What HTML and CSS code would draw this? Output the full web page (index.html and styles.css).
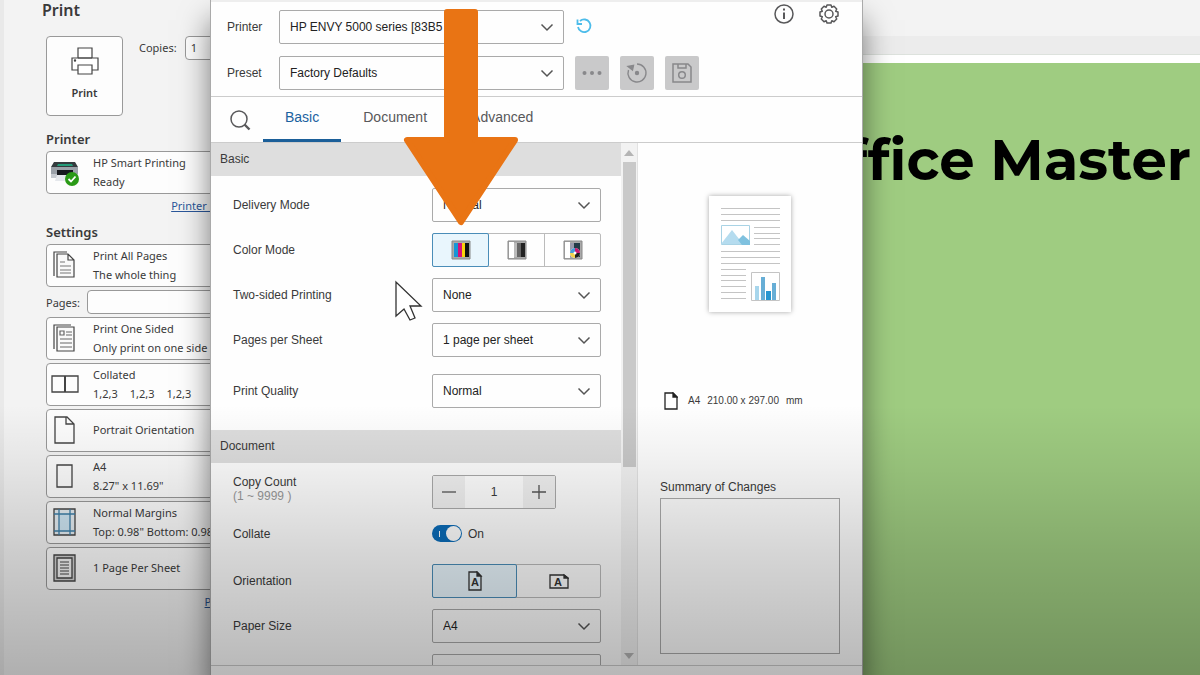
FILE: index.html
```html
<!DOCTYPE html>
<html lang="en">
<head>
    <meta charset="UTF-8">
    <meta name="viewport" content="width=device-width, initial-scale=1">
    <title>Print</title>
    <link rel="stylesheet" href="styles.css">
</head>
<body>

<svg class="symbols" aria-hidden="true">
    <symbol id="chevron" viewBox="0 0 14 14">
        <path d="M1.500 4.500 7 10l5.500-5.500" fill="none" stroke="currentColor" stroke-width="1.500"/>
    </symbol>
</svg>

<div class="desktop">
    <!-- Print settings of the editor -->
    <aside class="backstage">
        <h1>Print</h1>
        <div class="print-top">
            <button class="print-button" type="button">
                <svg width="28" height="28" viewBox="0 0 28 28" fill="#fff" stroke="#444" stroke-width="1.200">
                    <path d="M7 11V1h14v10"/>
                    <path d="M1 11h26v12H1z"/>
                    <path d="M7 11h14M7 18h14v9H7z"/>
                    <circle cx="4" cy="13.500" r=".6" fill="#444"/>
                </svg>
                Print
            </button>
            <label for="copies">Copies:</label>
            <input id="copies" type="text" value="1">
        </div>

        <h2>Printer</h2>
        <button class="option" type="button">
            <svg width="30" height="30" viewBox="0 0 30 30">
                <path d="M4 5h21l3 5H1z" fill="#343b3e"/>
                <path d="M8 7h14l1 2H7z" fill="#249b79"/>
                <path d="M1 10h27v9H1z" fill="#9ba1a8"/>
                <path d="M1 17h27v4H1z" fill="#c6cad0"/>
                <path d="M7 13h16v5H7z" fill="#17191e"/>
                <path d="M7 18h16l2 6H5z" fill="#e5e8ec"/>
                <circle cx="22" cy="22" r="7" fill="#2a9a16"/>
                <path d="m18.500 22 2.500 2.500 4.500-5" fill="none" stroke="#fff" stroke-width="1.800"/>
            </svg>
            <span>HP Smart Printing<br>Ready</span>
        </button>
        <a class="side-link" href="#">Printer Properties</a>

        <h2 class="settings-title">Settings</h2>
        <div class="options">
            <button class="option" type="button">
                <svg width="30" height="30" viewBox="0 0 30 30" fill="none" stroke="#444" stroke-width="1.200">
                    <path d="M4 26V2h13"/>
                    <path d="M7 4h11l6 6v17H7zM18 4v6h6" fill="#fafafa"/>
                    <path d="M10 12h5M10 16h11M10 20h11M10 23h11" stroke="#777"/>
                </svg>
                <span>Print All Pages<br>The whole thing</span>
            </button>
            <div class="pages">
                <label for="pages">Pages:</label>
                <input id="pages" type="text">
            </div>
            <button class="option" type="button">
                <svg width="30" height="30" viewBox="0 0 30 30" fill="none" stroke="#444" stroke-width="1.200">
                    <path d="M4 26V2h17"/>
                    <path d="M7 4h17v24H7z" fill="#fafafa"/>
                    <path d="M10 8h4v4h-4zM16 9h6M16 12h6M10 16h12M10 20h12M10 24h12" stroke="#666"/>
                </svg>
                <span>Print One Sided<br>Only print on one side of t...</span>
            </button>
            <button class="option" type="button">
                <svg width="30" height="30" viewBox="0 0 30 30" fill="none" stroke="#444" stroke-width="1.300">
                    <path d="M2 7h26v16H2z"/>
                    <path d="M15 7v16" stroke-width="2"/>
                </svg>
                <span class="sets">Collated<br><i>1,2,3</i><i>1,2,3</i><i>1,2,3</i></span>
            </button>
            <button class="option" type="button">
                <svg width="30" height="30" viewBox="0 0 30 30" fill="none" stroke="#444" stroke-width="1.300">
                    <path d="M5 2h12l7 7v19H5zM16 2v7h8"/>
                </svg>
                <span>Portrait Orientation</span>
            </button>
            <button class="option" type="button">
                <svg width="30" height="30" viewBox="0 0 30 30" fill="none" stroke="#444" stroke-width="1.300">
                    <path d="M7 4h15v22H7z"/>
                </svg>
                <span>A4<br>8.27" x 11.69"</span>
            </button>
            <button class="option" type="button">
                <svg width="30" height="30" viewBox="0 0 30 30" fill="none" stroke="#444" stroke-width="1.300">
                    <path d="M4 2h21v26H4z" fill="#e6eef3"/>
                    <path d="M9 7h11v17H9z" fill="#cfe6f4" stroke="none"/>
                    <path d="M9 2v26M20 2v26M4 7h21M4 24h21" stroke="#3d7fa8"/>
                </svg>
                <span>Normal Margins<br>Top: 0.98" Bottom: 0.98"</span>
            </button>
            <button class="option" type="button">
                <svg width="30" height="30" viewBox="0 0 30 30" fill="none" stroke="#444" stroke-width="1.300">
                    <path d="M4 2h21v26H4z" fill="#d2d2d2"/>
                    <path d="M7 5h15v20H7z" fill="#f3f3f3"/>
                    <path d="M10 9h9M10 12h9M10 15h9M10 18h9M10 21h9" stroke-width="1"/>
                </svg>
                <span>1 Page Per Sheet</span>
            </button>
        </div>
        <a class="side-link" href="#">Page Setup</a>
    </aside>

    <main class="document">
        <div class="ribbon"></div>
        <div class="ruler"></div>
        <div class="sheet">
            <p class="sheet-title">Office Master</p>
        </div>
    </main>

    <!-- HP print dialog -->
    <section class="dialog" aria-label="HP print settings">
        <header class="dialog-head">
            <div class="fields">
                <div class="field">
                    <label for="printer">Printer</label>
                    <div class="select">
                        <select id="printer"><option>HP ENVY 5000 series [83B5</option></select>
                        <svg><use href="#chevron"/></svg>
                    </div>
                    <button class="icon-button refresh" type="button" aria-label="Refresh">
                        <svg width="18" height="18" viewBox="0 0 18 18" fill="none" stroke="#4cbcea" stroke-width="1.800">
                            <path d="M5 3A6.300 6.300 0 1 1 3 9"/>
                            <path d="M2.500 1.500v4.500H7"/>
                        </svg>
                    </button>
                </div>
                <div class="field">
                    <label for="preset">Preset</label>
                    <div class="select">
                        <select id="preset"><option>Factory Defaults</option></select>
                        <svg><use href="#chevron"/></svg>
                    </div>
                    <button class="tool" type="button" aria-label="More">
                        <svg width="22" height="22" viewBox="0 0 22 22" fill="#88888b">
                            <circle cx="3.500" cy="11" r="2"/><circle cx="11" cy="11" r="2"/><circle cx="18.500" cy="11" r="2"/>
                        </svg>
                    </button>
                    <button class="tool" type="button" aria-label="Reset">
                        <svg width="22" height="22" viewBox="0 0 22 22" fill="none" stroke="#88888b" stroke-width="1.400">
                            <path d="M11 2a9 9 0 1 1-8.500 6"/>
                            <path d="M2 4.500 7.500 3.500 6.500 8z" fill="#88888b"/>
                            <circle cx="11" cy="11" r="1.500" fill="#88888b"/>
                        </svg>
                    </button>
                    <button class="tool" type="button" aria-label="Save">
                        <svg width="22" height="22" viewBox="0 0 22 22" fill="none" stroke="#88888b" stroke-width="1.500">
                            <path d="M2 2h15l3 3v15H2z"/>
                            <path d="M7 2v4h8V2"/>
                            <circle cx="11" cy="13" r="3.300"/>
                        </svg>
                    </button>
                </div>
            </div>
            <div class="head-icons">
                <button class="icon-button" type="button" aria-label="Information">
                    <svg width="22" height="22" viewBox="0 0 22 22" fill="none" stroke="#58585a" stroke-width="1.500">
                        <circle cx="11" cy="11" r="9"/>
                        <path d="M11 9.500V16" stroke-width="2"/>
                        <path d="M11 5.500v2" stroke-width="2"/>
                    </svg>
                </button>
                <button class="icon-button" type="button" aria-label="Settings">
                    <svg width="22" height="22" viewBox="0 0 22 22" fill="none" stroke="#58585a" stroke-width="1.500" stroke-linejoin="round">
                        <path d="M9 2h4l.8 2.300 2.200-1 2.700 2.700-1 2.200L20 9v4l-2.300.8 1 2.200-2.700 2.700-2.200-1L13 20H9l-.8-2.300-2.200 1L3.300 16l1-2.200L2 13V9l2.300-.8-1-2.200L6 3.300l2.200 1z"/>
                        <circle cx="11" cy="11" r="4"/>
                    </svg>
                </button>
            </div>
        </header>

        <nav class="tabs">
            <button class="icon-button search" type="button" aria-label="Search">
                <svg width="22" height="22" viewBox="0 0 22 22" fill="none" stroke="#58585a" stroke-width="1.500">
                    <circle cx="10" cy="10" r="8"/>
                    <path d="m15.500 15.500 5 5" stroke-width="2.400"/>
                </svg>
            </button>
            <a class="tab active" href="#">Basic</a>
            <a class="tab" href="#">Document</a>
            <a class="tab" href="#">Advanced</a>
        </nav>

        <div class="dialog-body">
            <div class="form">
                <h3>Basic</h3>
                <div class="rows">
                    <div class="row">
                        <label for="delivery">Delivery Mode</label>
                        <div class="select">
                            <select id="delivery"><option>Normal</option></select>
                            <svg><use href="#chevron"/></svg>
                        </div>
                    </div>
                    <div class="row">
                        <span id="color-label">Color Mode</span>
                        <div class="segments" role="group" aria-labelledby="color-label">
                            <button class="segment active" type="button" aria-label="Color">
                                <svg width="20" height="20" viewBox="0 0 20 20">
                                    <path d="M1 1h18v18H1z" fill="#aaa" stroke="#888"/>
                                    <path d="M3 3h4v14H3z" fill="#1796d6"/>
                                    <path d="M7 3h4v14H7z" fill="#d6127c"/>
                                    <path d="M11 3h3v14h-3z" fill="#fbd20b"/>
                                    <path d="M14 3h4v14h-4z" fill="#111"/>
                                </svg>
                            </button>
                            <button class="segment" type="button" aria-label="Grayscale">
                                <svg width="20" height="20" viewBox="0 0 20 20">
                                    <path d="M1 1h18v18H1z" fill="#aaa" stroke="#888"/>
                                    <path d="M2 2h5v16H2z" fill="#fff"/>
                                    <path d="M7 3h3v14H7z" fill="#bbb"/>
                                    <path d="M10 3h4v14h-4z" fill="#666"/>
                                    <path d="M14 3h4v14h-4z" fill="#222"/>
                                </svg>
                            </button>
                            <button class="segment" type="button" aria-label="Automatic">
                                <svg width="20" height="20" viewBox="0 0 20 20">
                                    <path d="M1 1h18v18H1z" fill="#aaa" stroke="#888"/>
                                    <path d="M2 2h5v16H2z" fill="#fff"/>
                                    <path d="M7 3h4v14H7z" fill="#99a"/>
                                    <path d="M11 3h6v14h-6z" fill="#243b48"/>
                                    <circle cx="12" cy="13" r="5" fill="#fff"/>
                                    <path d="M12 13V8a5 5 0 0 0-5 5z" fill="#4a9bd8"/>
                                    <path d="M12 13V8a5 5 0 0 1 5 5z" fill="#c81a72"/>
                                    <path d="M12 13H7a5 5 0 0 0 5 5z" fill="#f3d34a"/>
                                    <path d="M12 13h5a5 5 0 0 1-5 5z" fill="#222"/>
                                    <circle cx="12" cy="13" r="1.500" fill="#fff"/>
                                </svg>
                            </button>
                        </div>
                    </div>
                    <div class="row">
                        <label for="duplex">Two-sided Printing</label>
                        <div class="select">
                            <select id="duplex"><option>None</option></select>
                            <svg><use href="#chevron"/></svg>
                        </div>
                    </div>
                    <div class="row">
                        <label for="nup">Pages per Sheet</label>
                        <div class="select">
                            <select id="nup"><option>1 page per sheet</option></select>
                            <svg><use href="#chevron"/></svg>
                        </div>
                    </div>
                    <div class="row spaced">
                        <label for="quality">Print Quality</label>
                        <div class="select">
                            <select id="quality"><option>Normal</option></select>
                            <svg><use href="#chevron"/></svg>
                        </div>
                    </div>
                </div>

                <h3>Document</h3>
                <div class="rows">
                    <div class="row">
                        <label class="count-label" for="count">Copy Count<small>(1 ~ 9999 )</small></label>
                        <div class="stepper">
                            <button type="button" aria-label="Less">
                                <svg width="16" height="16" viewBox="0 0 16 16" stroke="#555" stroke-width="1.300"><path d="M1 8h14"/></svg>
                            </button>
                            <input id="count" type="text" value="1">
                            <button type="button" aria-label="More copies">
                                <svg width="16" height="16" viewBox="0 0 16 16" stroke="#555" stroke-width="1.300"><path d="M1 8h14M8 1v14"/></svg>
                            </button>
                        </div>
                    </div>
                    <div class="row short">
                        <label for="collate">Collate</label>
                        <div class="toggle">
                            <input id="collate" type="checkbox" checked>
                            <span>On</span>
                        </div>
                    </div>
                    <div class="row spaced">
                        <span id="orientation-label">Orientation</span>
                        <div class="segments" role="group" aria-labelledby="orientation-label">
                            <button class="segment active" type="button" aria-label="Portrait">
                                <svg width="20" height="20" viewBox="0 0 20 20" fill="none" stroke="#333" stroke-width="1.300">
                                    <path d="M4 1h8l4 4v14H4z"/>
                                    <path d="M12 1v4h4z" fill="#333"/>
                                    <text class="icon-letter" x="10" y="15">A</text>
                                </svg>
                            </button>
                            <button class="segment" type="button" aria-label="Landscape">
                                <svg width="20" height="20" viewBox="0 0 20 20" fill="none" stroke="#333" stroke-width="1.300">
                                    <path d="M1 4h14l4 3v10H1z"/>
                                    <path d="M15 4v3h4z" fill="#333"/>
                                    <text class="icon-letter" x="9" y="15">A</text>
                                </svg>
                            </button>
                        </div>
                    </div>
                    <div class="row">
                        <label for="paper">Paper Size</label>
                        <div class="select">
                            <select id="paper"><option>A4</option></select>
                            <svg><use href="#chevron"/></svg>
                        </div>
                    </div>
                    <div class="row">
                        <span></span>
                        <div class="select">
                            <select aria-label="Paper Source"><option></option></select>
                        </div>
                    </div>
                </div>
            </div>

            <div class="scrollbar">
                <span class="arrow-up"></span>
                <span class="thumb"></span>
                <span class="arrow-down"></span>
            </div>

            <div class="preview">
                <svg class="page" viewBox="0 0 82 116" fill="none" stroke="#c4c4c4">
                    <path d="M12 12.500h59M12 18.500h59M12 24.500h59M45 31.500h26M45 37.500h26M45 42.500h26M45 48.500h26M12 55.500h59M12 61.500h59M12 67.500h59M12 73.500h25M12 79.500h25M12 84.500h25M12 90.500h25M12 96.500h25M12 102.500h25"/>
                    <path d="M12.500 29.500h28v19h-28z" stroke="#a9d3e5"/>
                    <path d="m12 48 11-14 11 14z" fill="#b5dcef" stroke="none"/>
                    <path d="M29 44l5-5 7 6v4H33z" fill="#7fc1df" stroke="none"/>
                    <path d="M42.500 76.500h28v28h-28z"/>
                    <path d="M46 90h4v14h-4z" fill="#a8d6ec" stroke="none"/>
                    <path d="M52 81h4v23h-4zM63 87h4v17h-4z" fill="#67aed6" stroke="none"/>
                    <path d="M57 95h5v9h-5z" fill="#2896d0" stroke="none"/>
                </svg>
                <p class="paper-info">
                    <svg width="14" height="18" viewBox="0 0 14 18" fill="none" stroke="#222" stroke-width="1.300">
                        <path d="M1 1h8l4 4v12H1z"/>
                        <path d="M9 1v4h4z" fill="#222"/>
                    </svg>
                    <span>A4</span><span>210.00 x 297.00</span><span>mm</span>
                </p>
                <h4>Summary of Changes</h4>
                <div class="summary"></div>
            </div>
        </div>
        <footer class="dialog-foot"></footer>
    </section>

    <div class="shade"></div>

    <svg class="pointer-arrow" viewBox="0 0 116 217" fill="#e97414" stroke="#e97414" stroke-width="6" stroke-linejoin="round">
        <path d="M44 3h28v128h40L58 213 4 131h40z"/>
    </svg>
    <svg class="cursor" viewBox="0 0 28 42" fill="#fff" stroke="#333" stroke-width="1.300">
        <path d="M1 2v34l8-7 6 11 5-2-5-12h11z"/>
    </svg>
</div>

</body>
</html>
```
FILE: styles.css
```css
* {
    box-sizing: border-box;
}
body {
    margin: 0;
    color: #3a3a3a;
    font-family: "Liberation Sans", Arial, sans-serif;
    font-size: 12px;
}
h1, h2, h3, h4, p {
    margin: 0;
}
button, input, select {
    font: inherit;
    color: inherit;
}
button {
    padding: 0;
    background: none;
    border: none;
    cursor: pointer;
}
.symbols {
    position: absolute;
    width: 0;
    height: 0;
}
.desktop {
    position: relative;
    display: flex;
    height: 100vh;
    overflow: hidden;
}

/* Print settings */
.backstage {
    flex: none;
    width: 300px;
    padding: 0 37px 0 42px;
    background: #f3f3f3;
    border-left: 4px solid #e9e9e9;
    font-family: "Noto Sans", "Open Sans", sans-serif;
    font-size: 11px;
}
.backstage h1 {
    margin-left: -4px;
    font-size: 16px;
    line-height: 20px;
    font-weight: 600;
}
.backstage h2 {
    font-size: 13px;
    line-height: 24px;
    font-weight: 600;
}
.print-top {
    display: flex;
    align-items: flex-start;
    margin: 16px 0 11px;
    line-height: 24px;
}
.print-button {
    display: flex;
    flex-direction: column;
    align-items: center;
    width: 77px;
    height: 80px;
    margin-right: 16px;
    padding-top: 10px;
    gap: 6px;
    background: #fdfdfd;
    border: 1px solid #999;
    border-radius: 4px;
    font-weight: 600;
    line-height: 24px;
}
.backstage input {
    min-width: 0;
    height: 24px;
    padding: 0 5px;
    background: #fdfdfd;
    border: 1px solid #999;
    border-radius: 4px;
}
#copies {
    width: 50px;
    margin-left: 8px;
}
.option {
    display: flex;
    align-items: center;
    width: 100%;
    height: 43px;
    padding: 0 0 2px 3px;
    gap: 13px;
    background: #fdfdfd;
    border: 1px solid #999;
    border-radius: 4px;
    line-height: 19px;
    text-align: left;
    white-space: nowrap;
}
.option svg {
    flex: none;
}
.sets i {
    margin-right: 12px;
    font-style: normal;
}
.side-link {
    display: block;
    line-height: 24px;
    color: #2b579a;
    text-align: right;
}
.settings-title {
    margin-top: 2px;
}
.options {
    display: flex;
    flex-direction: column;
    gap: 3px;
}
.pages {
    display: flex;
    align-items: center;
    gap: 7px;
}
.pages input {
    flex: 1;
}

/* Document window */
.document {
    flex: 1;
    display: flex;
    flex-direction: column;
}
.ribbon {
    height: 36px;
    background: #f3f3f3;
}
.ruler {
    height: 19px;
    background: #ececec;
    border-bottom: 1px solid #dde2dd;
}
.sheet {
    flex: 1;
    padding: 61px 9px 0;
    background: #9fcc81;
    border-top: 8px solid #fff;
}
.sheet-title {
    color: #000;
    font-family: Montserrat, Inter, sans-serif;
    font-size: 56px;
    line-height: 72px;
    font-weight: 700;
    font-variant-ligatures: none;
    text-align: right;
    white-space: nowrap;
}

/* Print dialog */
.dialog {
    position: absolute;
    top: 0;
    bottom: 0;
    left: 210px;
    width: 653px;
    display: flex;
    flex-direction: column;
    background: #fefefe;
    border: solid #aaa;
    border-width: 0 1px;
    box-shadow: 0 20px 28px rgba(0, 0, 0, 0.5);
}
.dialog-head {
    display: flex;
    justify-content: space-between;
    align-items: flex-start;
    padding: 1px 22px 6px 16px;
    border-top: 2px solid #eee;
    border-bottom: 1px solid #ccc;
}
.fields {
    display: grid;
    gap: 12px;
    padding-top: 7px;
}
.field {
    display: flex;
    align-items: center;
    gap: 11px;
}
.field label {
    width: 41px;
}
.field .select {
    width: 285px;
}
.select {
    display: grid;
    align-items: center;
    height: 34px;
}
.select select, .select svg {
    grid-area: 1 / 1;
}
.select select {
    width: 100%;
    height: 34px;
    padding: 0 10px;
    appearance: none;
    background: transparent;
    border: 1px solid #aaa;
    border-radius: 2px;
    color: #222;
}
.select svg {
    justify-self: end;
    width: 14px;
    height: 14px;
    margin-right: 10px;
    color: #555;
    pointer-events: none;
}
.icon-button {
    display: flex;
}
.tool {
    display: flex;
    align-items: center;
    justify-content: center;
    width: 34px;
    height: 34px;
    background: #c9c9ca;
    border-radius: 2px;
}
.head-icons {
    display: flex;
    gap: 23px;
}
.tabs {
    display: flex;
    height: 46px;
    border-bottom: 1px solid #ccc;
}
.search {
    align-items: center;
    margin: 0 12px 0 18px;
}
.tab {
    padding: 0 22px;
    border-bottom: 3px solid transparent;
    color: #58585a;
    font-size: 14px;
    line-height: 40px;
    text-decoration: none;
}
.tab.active {
    color: #1b62a0;
    border-bottom-color: #1b5f99;
}
.dialog-body {
    flex: 1;
    display: flex;
    min-height: 0;
}
.dialog-foot {
    height: 10px;
    border-top: 1px solid #ccc;
}
.form {
    flex: 1;
    overflow: hidden;
}
.form h3 {
    padding-left: 9px;
    background: #dedede;
    font-size: 12px;
    line-height: 33px;
    font-weight: 400;
}
.rows {
    display: grid;
    gap: 11px;
    padding: 12px 20px 22px 22px;
}
.row {
    display: grid;
    grid-template-columns: 1fr 169px;
    align-items: center;
    height: 34px;
}
.row.short {
    height: 27px;
}
.row.spaced {
    margin-top: 6px;
}
.count-label {
    align-self: start;
    line-height: 14px;
}
.count-label small {
    display: block;
    color: #999;
    font-size: 12px;
}
.segments {
    display: flex;
    height: 34px;
    border: 1px solid #bbb;
    border-radius: 2px;
}
.segment {
    flex: 1;
    display: flex;
    align-items: center;
    justify-content: center;
}
.segment + .segment {
    border-left: 1px solid #bbb;
}
.segment.active {
    margin: -1px 0 -1px -1px;
    background: #e9f6fd;
    border: 1px solid #4a8db8;
    border-radius: 2px;
}
.segment.active + .segment {
    border-left: none;
}
.icon-letter {
    fill: #333;
    stroke: none;
    font-size: 11px;
    font-weight: 700;
    text-anchor: middle;
}
.stepper {
    display: flex;
    width: 124px;
    height: 34px;
    border: 1px solid #aaa;
    border-radius: 2px;
}
.stepper button {
    display: flex;
    align-items: center;
    justify-content: center;
    width: 32px;
    background: #f1f1f1;
}
.stepper input {
    flex: 1;
    min-width: 0;
    padding: 0;
    background: #fff;
    border: none;
    text-align: center;
}
.toggle {
    display: flex;
    align-items: center;
    gap: 6px;
}
.toggle input {
    display: flex;
    align-items: center;
    justify-content: space-between;
    width: 30px;
    height: 17px;
    margin: 0;
    padding: 0 1px 0 7px;
    appearance: none;
    background: #0b6cb8;
    border-radius: 9px;
}
.toggle input::before {
    content: "";
    width: 1px;
    height: 6px;
    background: #fff;
}
.toggle input::after {
    content: "";
    width: 15px;
    height: 15px;
    background: #fff;
    border-radius: 50%;
}
.scrollbar {
    display: flex;
    flex-direction: column;
    align-items: center;
    width: 17px;
    padding: 7px 0 6px;
    background: #f2f2f2;
    border-right: 1px solid #e2e2e2;
}
.arrow-up, .arrow-down {
    border: 5px solid transparent;
}
.arrow-up {
    border-top: none;
    border-bottom: 6px solid #b4b4b4;
}
.arrow-down {
    margin-top: auto;
    border-bottom: none;
    border-top: 6px solid #b4b4b4;
}
.thumb {
    width: 13px;
    height: 60%;
    margin-top: 6px;
    background: #c9c9c9;
}
.preview {
    display: flex;
    flex-direction: column;
    width: 224px;
    padding: 53px 22px 11px;
}
.page {
    align-self: center;
    width: 82px;
    height: 116px;
    background: #fff;
    box-shadow: 0 0 5px rgba(0, 0, 0, 0.35);
}
.paper-info {
    display: flex;
    align-items: center;
    gap: 7px;
    margin: 80px 0 68px 4px;
    font-size: 10px;
    line-height: 18px;
}
.paper-info svg {
    margin-right: 3px;
}
.preview h4 {
    font-size: 12px;
    line-height: 18px;
    font-weight: 400;
}
.summary {
    flex: 1;
    margin-top: 2px;
    border: 1px solid #aaa;
}

/* Things lying over the windows */
.shade {
    position: absolute;
    inset: 0;
    background: linear-gradient(transparent 60%, rgba(0, 0, 0, 0.06) 69%, rgba(0, 0, 0, 0.16) 82%, rgba(0, 0, 0, 0.28));
    pointer-events: none;
}
.pointer-arrow {
    position: absolute;
    top: 9px;
    left: 403px;
    width: 116px;
    height: 217px;
    pointer-events: none;
}
.cursor {
    position: absolute;
    top: 280px;
    left: 395px;
    width: 28px;
    height: 42px;
    pointer-events: none;
}
```
